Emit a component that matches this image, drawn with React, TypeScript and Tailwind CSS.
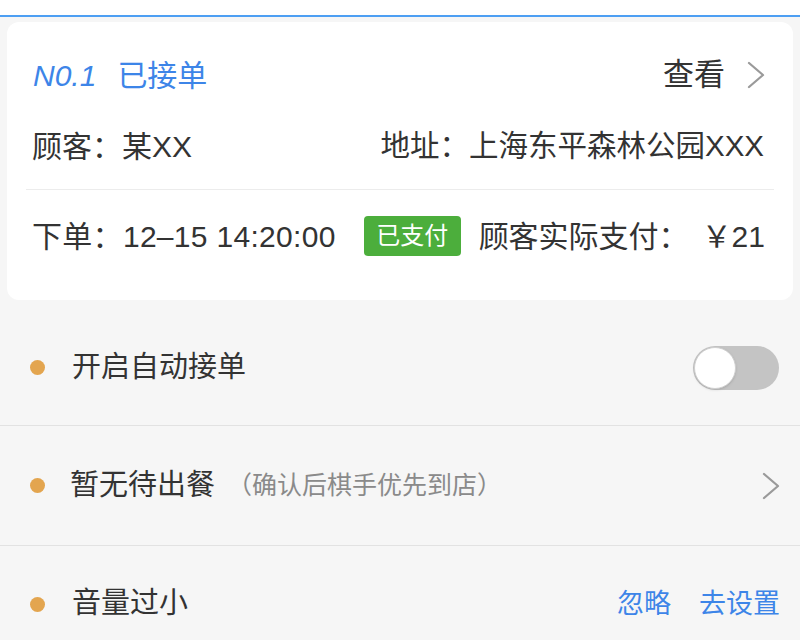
import React from "react";

const font = { fontFamily: '"Liberation Sans", "Noto Sans CJK SC", sans-serif' };

function Chevron({ className = "" }: { className?: string }) {
  return (
    <svg viewBox="0 0 18 28" className={className} fill="none" stroke="#9a9a9a" strokeWidth="2.3" strokeLinecap="round" strokeLinejoin="round">
      <path d="M2 2 L16 14 L2 26" />
    </svg>
  );
}

function Dot() {
  return <span className="w-[15px] h-[15px] rounded-full bg-[#e3a54f] shrink-0" />;
}

export default function App() {
  return (
    <div className="w-[800px] h-[640px] overflow-hidden bg-[#f6f6f6] text-[#333]" style={font}>
      {/* top bar edge */}
      <div className="h-[15px] bg-white" />
      <div className="h-[2px] bg-[#4d9ff3]" />

      {/* 订单卡片 */}
      <div className="mx-[7px] mt-[5px] rounded-[12px] bg-white pt-[28px] pb-[39px]">
        <div className="h-[50px] pl-[26px] pr-[28px] flex items-center justify-between">
          <div className="flex items-center text-[30px] text-[#3d85e8]">
            <span className="italic">N0.1</span>
            <span className="ml-[21px]">已接单</span>
          </div>
          <div className="flex items-center text-[31px] text-[#333]">
            <span>查看</span>
            <Chevron className="w-[18px] h-[28px] ml-[22px]" />
          </div>
        </div>

        <div className="mt-[21px] h-[50px] pl-[25px] pr-[29px] flex items-center justify-between text-[30px]">
          <span>顾客：某XX</span>
          <span className="text-[29.5px]">地址：上海东平森林公园XXX</span>
        </div>

        <div className="mx-[19px] mt-[18px] h-[1px] bg-[#ececec]" />

        <div className="mt-[21px] h-[50px] pl-[25px] pr-[28px] flex items-center text-[30px]">
          <span className="tracking-[0.3px]">下单：12–15 14:20:00</span>
          <span className="ml-[28px] w-[97px] h-[40px] rounded-[4px] bg-[#4cae3c] text-white text-[24px] flex items-center justify-center">
            已支付
          </span>
          <span className="ml-auto">
            顾客实际支付：<span className="ml-[13px]">￥21</span>
          </span>
        </div>
      </div>

      {/* 状态列表 */}
      <div className="mt-[10px]">
        <div className="h-[116px] pl-[30px] pr-[21px] flex items-center border-b border-[#e2e2e2]">
          <Dot />
          <span className="ml-[27px] text-[29px] flex-1">开启自动接单</span>
          <div className="relative w-[86px] h-[44px] rounded-full bg-[#c4c4c4]">
            <span className="absolute left-[1px] top-[1px] w-[42px] h-[42px] rounded-full bg-white border border-[#d0d0d0] shadow-sm" />
          </div>
        </div>

        <div className="h-[120px] pl-[30px] pr-[20px] flex items-center border-b border-[#e2e2e2]">
          <Dot />
          <span className="ml-[25px] text-[29px]">暂无待出餐</span>
          <span className="ml-[12px] text-[25px] text-[#8a8a8a] flex-1">（确认后棋手优先到店）</span>
          <Chevron className="w-[18px] h-[28px]" />
        </div>

        <div className="h-[116px] pl-[30px] pr-[20px] flex items-center">
          <Dot />
          <span className="ml-[27px] text-[29px] flex-1">音量过小</span>
          <span className="text-[27px] text-[#3d85e8]">忽略</span>
          <span className="ml-[28px] text-[27px] text-[#3d85e8]">去设置</span>
        </div>
      </div>
    </div>
  );
}
